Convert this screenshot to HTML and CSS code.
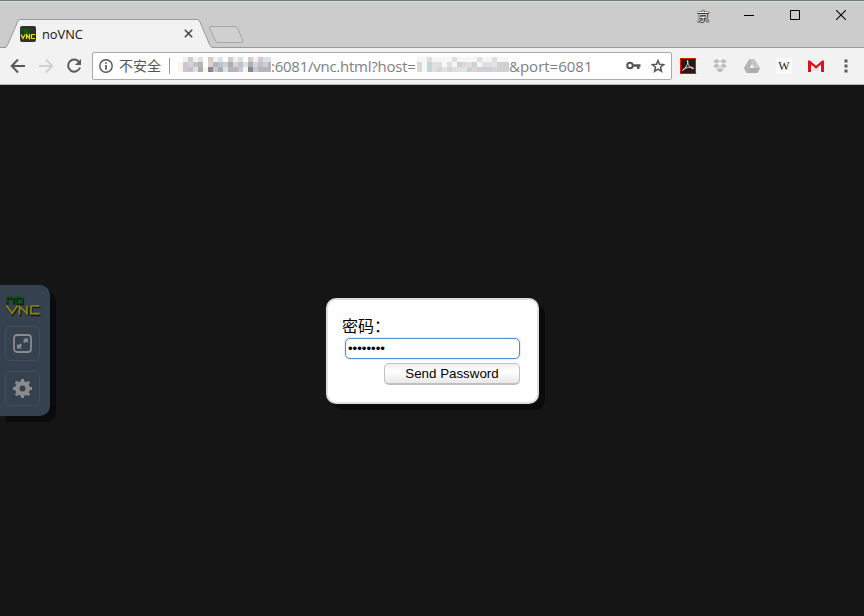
FILE: index.html
```html
<!DOCTYPE html>
<html lang="zh-CN">
<head>
<meta charset="utf-8">
<title>noVNC</title>
<link rel="stylesheet" href="styles.css">
</head>
<body>
<div class="window">
  <header class="titlebar">
    <svg class="tabshape" width="250" height="30" viewBox="0 0 250 30">
      <path d="M5 29.5Q6.5 28.5 7.5 26L18 2Q18.5.5 20 .5H197Q199 .5 199.5 2L210 26.500Q211 28.500 213 28.500V30H5Z" fill="#f2f2f2"/>
      <path d="M0 28.500H4Q6.500 28.500 7.500 26L18 2Q18.500.5 20 .5H197Q199 .5 199.500 2L210 26.500Q211 28.500 213 28.500H250" fill="none" stroke="#999"/>
      <path d="M211 7.500H235Q236.500 7.500 237.500 9L243 22Q243.500 23.500 242 23.500H218Q216 23.500 215.500 22L209.500 9Q209 7.500 211 7.500Z" fill="#d0d0d0" stroke="#a5a5a5"/>
    </svg>
    <div class="tab">
      <svg class="favicon" width="16" height="16" viewBox="0 0 16 16">
        <rect width="16" height="16" rx="2" fill="#303030"/>
        <path d="M1.500 7V3.500H4.500V7M6.500 3.500H9.500V6.500H6.500Z" fill="none" stroke="#006c00"/>
        <path d="M1 8.500L3 12.500L5 8.500M6.500 13V8.500L9.500 12.500V8M15 8.500H11.500V12.500H15" fill="none" stroke="#e8e800" stroke-width="1.200"/>
      </svg>
      <span class="tab-title">noVNC</span>
      <svg class="tab-close" width="9" height="9" viewBox="0 0 9 9"><path d="M.8.8L8.200 8.200M8.200.8L.8 8.200" stroke="#444" stroke-width="1.500"/></svg>
    </div>
    <div class="winctl">
      <span class="jing">京</span>
      <svg width="10" height="10" viewBox="0 0 10 10"><path d="M0 5.500H10" stroke="#000"/></svg>
      <svg width="10" height="10" viewBox="0 0 10 10"><path d="M.5.5H9.500V9.500H.5Z" fill="none" stroke="#000"/></svg>
      <svg width="10" height="10" viewBox="0 0 10 10"><path d="M0 0L10 10M10 0L0 10" stroke="#000" stroke-width="1.100"/></svg>
    </div>
  </header>
  <nav class="toolbar">
    <svg class="nav" width="16" height="16" viewBox="0 0 16 16"><path d="M8 1.500L1.700 8L8 14.500M2 8H15" fill="none" stroke="#5a5a5a" stroke-width="2"/></svg>
    <svg class="nav" width="16" height="16" viewBox="0 0 16 16"><path d="M8 1.500L14.300 8L8 14.500M14 8H1" fill="none" stroke="#d2d2d2" stroke-width="2"/></svg>
    <svg class="nav" width="16" height="16" viewBox="0 0 16 16"><path d="M13.300 4.200A6.100 6.100 0 1 0 14 9.500" fill="none" stroke="#5a5a5a" stroke-width="2"/><path d="M15 1V7H9Z" fill="#5a5a5a"/></svg>
    <div class="omnibox">
      <svg class="info" width="14" height="14" viewBox="0 0 14 14"><circle cx="7" cy="7" r="6.200" fill="none" stroke="#555" stroke-width="1.400"/><path d="M7 3.200V4.800M7 6V10.800" stroke="#555" stroke-width="1.700"/></svg>
      <span class="insecure">不安全</span>
      <i class="divider"></i>
      <svg class="mosaic-a" width="93" height="15" viewBox="0 0 93 15" shape-rendering="crispEdges">
        <g fill="#f1f1f2"><path d="M5 0h5v5h-5zM15 0h5v5h-5zM35 0h5v5h-5zM55 0h5v5h-5zM75 0h5v5h-5z"/></g>
        <g fill="#cfcdcd"><path d="M10 0h5v5h-5zM30 0h5v5h-5zM50 0h5v5h-5zM70 0h5v5h-5zM80 0h5v5h-5zM85 5h5v5h-5zM45 5h5v5h-5z"/></g>
        <g fill="#dae2e9"><path d="M20 0h5v5h-5zM40 0h5v5h-5zM60 0h5v5h-5zM85 0h8v5h-8zM15 10h5v5h-5zM45 10h5v5h-5zM65 5h5v5h-5z"/></g>
        <g fill="#fbf5e7"><path d="M0 5h5v10h-5zM25 10h5v5h-5zM65 10h5v5h-5z"/></g>
        <g fill="#c8c6dc"><path d="M5 5h5v10h-5zM35 10h5v5h-5zM60 10h5v5h-5zM75 10h5v5h-5z"/></g>
        <g fill="#ddd1cb"><path d="M10 5h5v5h-5zM30 5h5v5h-5zM55 5h5v5h-5zM75 5h5v5h-5z"/></g>
        <g fill="#bdc3cc"><path d="M15 5h5v5h-5zM40 5h5v5h-5zM60 5h5v5h-5zM80 5h5v5h-5zM10 10h5v5h-5z"/></g>
        <g fill="#a5b2b0"><path d="M50 5h5v5h-5zM70 5h5v5h-5zM20 10h5v5h-5zM40 10h5v5h-5z"/></g>
        <g fill="#8b858d"><path d="M30 10h5v5h-5zM70 10h5v5h-5z"/></g>
        <g fill="#b8b4b8"><path d="M20 5h5v5h-5zM35 5h5v5h-5zM50 10h10v5h-10zM80 10h13v5h-13zM90 5h3v5h-3z"/></g>
      </svg>
      <span class="url url-a">:6081/vnc.html?host=</span>
      <svg class="mosaic-b" width="92" height="15" viewBox="0 0 92 15" shape-rendering="crispEdges">
        <path d="M0 0H92V15H0Z" fill="#f5f6f6"/>
        <path d="M0 5h5v10h-5zM45 5h5v5h-5z" fill="#ded6d7"/>
        <path d="M5 5h5v10h-5z" fill="#effafa"/>
        <path d="M10 0h5v5h-5zM35 0h5v5h-5zM60 0h5v5h-5zM75 0h5v5h-5zM15 5h10v5h-10zM30 5h5v5h-5zM50 5h5v5h-5zM65 5h10v5h-10zM15 10h5v5h-5zM35 10h10v5h-10z" fill="#dedfe1"/>
        <path d="M10 5h5v10h-5zM40 5h5v5h-5zM55 5h5v5h-5zM60 10h15v5h-15zM80 5h12v10h-12zM50 10h5v5h-5z" fill="#cdd0d4"/>
        <path d="M20 10h5v5h-5zM30 10h5v5h-5zM55 10h5v5h-5zM75 10h5v5h-5z" fill="#dbd4d0"/>
        <path d="M25 10h5v5h-5zM75 5h5v5h-5zM45 10h5v5h-5z" fill="#dbe5ea"/>
      </svg>
      <span class="url url-b">&amp;port=6081</span>
      <svg class="key" width="15" height="10" viewBox="0 0 15 10"><circle cx="4" cy="4.500" r="2.800" fill="none" stroke="#555" stroke-width="2"/><path d="M7 3.300H14.500V5.700H13.500V8H11V5.700H7Z" fill="#555"/></svg>
      <svg class="star" width="14" height="14" viewBox="0 0 14 14"><path d="M7 1.500L8.500 5.300L12.700 5.600L9.500 8.200L10.500 12.400L7 10.200L3.500 12.400L4.500 8.200L1.300 5.600L5.500 5.300Z" fill="none" stroke="#555" stroke-width="1.500"/></svg>
    </div>
    <div class="extensions">
      <svg width="16" height="16" viewBox="0 0 16 16"><rect x=".5" y=".5" width="15" height="15" fill="#2c1717" stroke="#d81e05"/><path d="M7.300 2.500C9 3 7.300 8 3 12.500C2 13 2.500 11 6 10C10 8.700 14 9 13.500 10.500C12 11.500 7.500 8 7.300 2.500Z" fill="none" stroke="#ddd" stroke-width="1"/></svg>
      <svg width="16" height="16" viewBox="0 0 16 16"><path d="M4.500 1L8 3.300L4.500 5.600L1 3.300ZM11.500 1L15 3.300L11.500 5.600L8 3.300ZM4.500 5.600L8 7.900L4.500 10.200L1 7.900ZM11.500 5.600L15 7.900L11.500 10.200L8 7.900ZM8 9.500L12 12L8 14.600L4 12Z" fill="#bdbdbd"/></svg>
      <svg width="16" height="16" viewBox="0 0 16 16"><path d="M5.500 1H10.500L16 10L13.500 15H2.500L0 10Z" fill="#c5c5c5"/><path d="M5.500 1L0 10L2.500 15L8 5.500Z" fill="#b5b5b5"/><path d="M5.300 10L2.500 15H13.500L16 10Z" fill="#acacac"/><path d="M8 6L10.300 10H5.700Z" fill="#f2f2f2"/></svg>
      <span class="wiki">W</span>
      <svg width="16" height="16" viewBox="0 0 16 16"><path d="M0 2H16V14H0Z" fill="#fff"/><path d="M3 13L6.500 8.500L8 10L9.500 8.500L13 13Z" fill="#e4e4e4"/><path d="M0 2.500H2L8 7.800L14 2.500H16V14H13V6.500L8 10.800L3 6.500V14H0Z" fill="#d9141e"/><path d="M2.500 2H13.500L8 6.800Z" fill="#eee"/></svg>
      <svg class="more" width="4" height="14" viewBox="0 0 4 14"><path d="M.5.500h3v3h-3zM.5 5.500h3v3h-3zM.5 10.500h3v3h-3z" fill="#5a5a5a"/></svg>
    </div>
  </nav>
  <main class="page">
    <aside class="controlbar">
      <svg class="logo" width="36" height="22" viewBox="0 0 36 22">
        <g fill="none" stroke-width="1.700">
          <path d="M2 9V3H8.500V9M11.500 3H17.500V8.500H11.500Z" stroke="#111c14" transform="translate(.7 .8)"/>
          <path d="M1.500 11.500L7 19.500L12.500 11.500M15 20.500V12L22.500 19V11M34.500 11.500H26V19.500H34.500" stroke="#15191d" transform="translate(.7 .8)"/>
          <path d="M2 8.500V2.300H8V8.500M11 2.300H17V8H11Z" stroke="#064d0b"/>
          <path d="M1.500 10.500L7 18.500L12.500 10.500M14.500 19.500V11.500L22 18.500V10.500M34.500 11H26V18.700H34.500" stroke="#84840a"/>
        </g>
      </svg>
      <div class="cbutton"><svg width="21" height="21" viewBox="0 0 21 21"><rect x="2" y="2" width="17" height="17" rx="3" fill="none" stroke="#8b8b8b" stroke-width="1.800"/><path d="M11 5.500H16V10L14.500 8.500L12.500 10L11 8.500L12.500 7ZM5 11L6.500 12L8.500 10.500L10 12.500L8.500 14.500L10 15.500H5Z" fill="#8b8b8b"/></svg></div>
      <div class="cbutton"><svg width="21" height="21" viewBox="0 0 21 21"><circle cx="10.500" cy="10.500" r="5.200" fill="none" stroke="#8b8b8b" stroke-width="4.500"/><path d="M10.500 1V4M10.500 17V20M1 10.500H4M17 10.500H20M3.800 3.800L6 6M15 15L17.200 17.200M3.800 17.200L6 15M15 6L17.200 3.800" stroke="#8b8b8b" stroke-width="3"/></svg></div>
    </aside>
    <form class="dialog">
      <label for="password">密码：</label>
      <input id="password" type="password" value="password">
      <button type="button">Send Password</button>
    </form>
  </main>
</div>
</body>
</html>
```
FILE: styles.css
```css
* { box-sizing: border-box; }
body { margin: 0; overflow: hidden; font-family: "Open Sans", "Noto Sans CJK SC", sans-serif; }
svg { display: block; flex: none; }
.window { width: 864px; height: 616px; display: flex; flex-direction: column; background: #151515; }
.titlebar { height: 48px; display: flex; justify-content: space-between; position: relative; background: linear-gradient(#999, #999) bottom / 100% 1px no-repeat #ccc; border-top: 1px solid #6d7f70; box-shadow: inset 0 1px #d8d8d8; }
.tabshape { position: absolute; left: 0; bottom: -1px; }
.tab { position: relative; width: 205px; margin-top: 18px; height: 29px; padding: 0 11px 0 20px; display: flex; align-items: center; }
.tab-title { margin-left: 6px; font-size: 12.800px; color: #111; flex: 1; }
.tab-close { margin-right: 1px; }
.winctl { display: flex; height: 28px; align-items: center; gap: 36px; padding-right: 18px; }
.jing { width: 13px; margin: 2px -2px 0 0; font: 12px/14px "Noto Sans CJK SC", sans-serif; color: #fff; text-shadow: 0 0 1px #000, 0 0 1px #000, 1px 0 1px #222, 0 1px 1px #222; }
.toolbar { height: 37px; flex: none; background: #f2f2f2; border-bottom: 1px solid #b6b6b6; display: flex; align-items: center; padding-left: 10px; }
.nav { margin-right: 12px; }
.omnibox { width: 580px; height: 28px; border: 1px solid #a9a9a9; border-radius: 2px; background: #fff; display: flex; align-items: center; padding: 0 6px; margin-left: -2px; white-space: nowrap; }
.insecure { font: 14px/20px "Noto Sans CJK SC", sans-serif; color: #555; margin: -2px 0 0 6px; width: 42px; }
.divider { width: 1px; height: 16px; background: #999; margin: 0 8px; }
.mosaic-a { margin-top: -4px; }
.mosaic-b { margin-top: -4px; margin-left: 2px; }
.url { flex: none; font-size: 15px; color: #808080; line-height: 22px; margin-top: -1px; }
.url-a { width: 144px; letter-spacing: -.25px; }
.url-b { width: 83px; letter-spacing: 0; }
.key { margin-left: auto; }
.star { margin-left: 10px; }
.extensions { display: flex; align-items: center; gap: 16px; margin-left: 8px; }
.wiki { width: 16px; height: 16px; background: #fafafa; font: 12px/16px "Liberation Serif", serif; text-align: center; color: #222; border-radius: 2px; }
.more { margin-left: 4px; }
.page { flex: 1; display: grid; grid-template-columns: 50px 1fr 50px; align-items: center; }
.controlbar { height: 131px; background: #36414f; border-radius: 0 10px 10px 0; box-shadow: 6px 6px 0 #0b0b0b; display: flex; flex-direction: column; padding: 10px 5px 0; }
.logo { margin-bottom: 9px; }
.cbutton { flex: none; width: 35px; height: 35px; border: 1px solid #444d5a; border-radius: 5px; display: grid; place-items: center; margin-bottom: 10px; }
.dialog { width: 213px; height: 106px; justify-self: center; border: 2px solid #dedede; border-radius: 10px; background: #fff; box-shadow: 6px 6px 0 #0b0b0b; display: flex; flex-direction: column; align-items: flex-end; padding: 15px 17px 0 15px; margin-left: 1px; }
.dialog label { align-self: flex-start; font: 16px/21px "Noto Sans CJK SC", sans-serif; margin: 0 0 2px -1px; color: #000; }
.dialog input { width: 175px; height: 21px; border: 1px solid #4a90d9; border-radius: 5px; padding: 1px 2px; font: 13.200px "Liberation Sans", sans-serif; outline: none; box-shadow: 0 0 2px #9cc6f0; background: #fff; color: #000; }
.dialog button { width: 136px; height: 22px; margin-top: 4px; padding: 0; border: 1px solid #c0c0c0; border-bottom-width: 2px; border-radius: 5px; background: linear-gradient(#f0f0f0, #fff 40%, #e8e8e8); font: 13.333px/17px "Liberation Sans", sans-serif; color: #000; }
```
